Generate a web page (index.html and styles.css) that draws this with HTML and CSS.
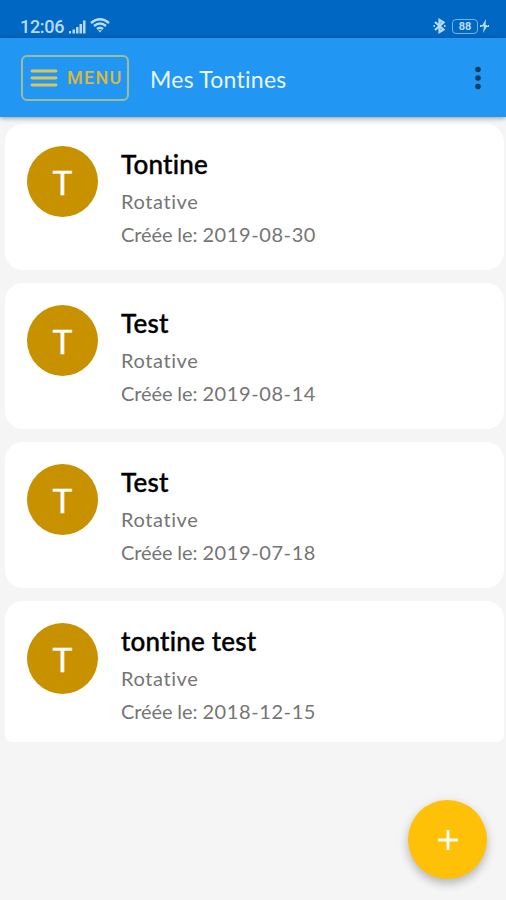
FILE: index.html
```html
<!DOCTYPE html>
<html lang="fr">
<head>
<meta charset="utf-8">
<title>Mes Tontines</title>
<link rel="stylesheet" href="styles.css">
</head>
<body>
<div class="status">
  <span class="clock">12:06</span>
  <svg class="signal" width="17" height="14" viewBox="0 0 17 14" fill="currentColor"><path d="M0 11h2v2.500H0zM3.500 9.500h2.500v4H3.500zM7 7h2.500v6.500H7zM10.500 4h2.500v9.500h-2.500zM14 0.500h2.500v13H14z"/></svg>
  <svg class="wifi" width="20" height="15" viewBox="0 0 20 15" fill="none" stroke="currentColor" stroke-width="2.400"><path d="M1 5Q10-2.500 19 5M4 8Q10 3 16 8M7 11Q10 8.500 13 11"/><path d="M8 12.200h4L10 14.500z" fill="currentColor" stroke="none"/></svg>
  <svg class="bluetooth" width="13" height="16" viewBox="0 0 13 16" fill="none" stroke="currentColor" stroke-width="2.200"><path d="M2 4l8.500 7.500L6.500 14V2l4 2.500L2 12M0.500 8h1.500M11 8h1.500"/></svg>
  <span class="battery">88</span>
  <svg class="bolt" width="9" height="14" viewBox="0 0 9 14" fill="currentColor"><path d="M6 0L1.500 7.500H4L3 14l5-8H5.500zM0 6h2v2H0zM7 6h2v2H7z"/></svg>
</div>
<header class="bar">
  <button class="menu">
    <svg width="28" height="20" viewBox="0 0 28 20" stroke="currentColor" stroke-width="2.800" stroke-linecap="round"><path d="M2 3h24M2 10h24M2 17h24"/></svg>
    <span>MENU</span>
  </button>
  <h1>Mes Tontines</h1>
  <svg class="more" width="6" height="24" viewBox="0 0 6 24" fill="currentColor"><circle cx="3" cy="3.500" r="2.800"/><circle cx="3" cy="12" r="2.800"/><circle cx="3" cy="20.500" r="2.800"/></svg>
</header>
<main class="list">
  <article class="card"><div class="avatar">T</div><div><h2>Tontine</h2><p class="type">Rotative</p><p class="date">Créée le: <span>2019-08-30</span></p></div></article>
  <article class="card"><div class="avatar">T</div><div><h2>Test</h2><p class="type">Rotative</p><p class="date">Créée le: <span>2019-08-14</span></p></div></article>
  <article class="card"><div class="avatar">T</div><div><h2>Test</h2><p class="type">Rotative</p><p class="date">Créée le: <span>2019-07-18</span></p></div></article>
  <article class="card last"><div class="avatar">T</div><div><h2>tontine test</h2><p class="type">Rotative</p><p class="date">Créée le: <span>2018-12-15</span></p></div></article>
</main>
<button class="fab" aria-label="Ajouter"><svg width="22" height="22" viewBox="0 0 22 22" stroke="currentColor" stroke-width="2.800"><path d="M11 1v20M1 11h20"/></svg></button>
</body>
</html>
```
FILE: styles.css
```css
* { box-sizing: border-box; }
body {
  margin: 0;
  height: 900px;
  overflow: hidden;
  background: #f5f5f5;
  font-family: Lato, "Liberation Sans", sans-serif;
}
h1, h2, p { margin: 0; }
button { padding: 0; font: inherit; }
svg { display: block; flex: none; }

.status {
  height: 38px;
  padding: 15px 17px 0 20px;
  display: flex;
  align-items: flex-start;
  background: #0067c3;
  color: #b7dcfb;
}
.clock {
  width: 44px;
  font: 500 18px/24px Roboto, sans-serif;
  letter-spacing: -0.3px;
}
.signal { margin: 5px 0 0 5px; }
.wifi { margin: 3px 0 0 4px; }
.bluetooth { margin: 3px 6px 0 auto; }
.battery {
  width: 26px;
  height: 15px;
  margin-top: 4px;
  border: 1.5px solid #72b4ea;
  border-radius: 4px;
  font: 700 11px/13px Roboto, sans-serif;
  text-align: center;
}
.bolt { margin: 4px 0 0 2px; }

.bar {
  position: relative;
  height: 79px;
  padding: 0 25px 0 21px;
  display: flex;
  align-items: center;
  background: #2196f3;
  box-shadow: 0 1px 5px rgba(0, 0, 0, .4);
}
.menu {
  width: 108px;
  height: 46px;
  padding-left: 7px;
  display: flex;
  align-items: center;
  gap: 9px;
  border: 2px solid #9bbd9a;
  border-radius: 6px;
  background: none;
  color: #dfc45a;
}
.menu span {
  padding-top: 1px;
  font: 500 18px/24px Roboto, sans-serif;
  letter-spacing: 1.3px;
  color: #dcb83c;
}
.bar h1 {
  margin-left: 21px;
  padding-top: 3px;
  font-size: 23px;
  font-weight: 400;
  line-height: 28px;
  letter-spacing: .25px;
  color: #e9f5ff;
}
.more { margin-left: auto; color: #173e5e; }

.list {
  padding: 7px 2px 0 5px;
  display: flex;
  flex-direction: column;
  gap: 13px;
}
.card {
  height: 146px;
  padding: 22px 22px 0;
  display: flex;
  gap: 23px;
  border-radius: 18px;
  background: #fff;
}
.card.last { height: 141px; border-radius: 18px 18px 7px 7px; }
.avatar {
  width: 71px;
  height: 71px;
  border-radius: 50%;
  background: #c79100;
  color: #fff;
  font: 400 34px/74px Roboto, sans-serif;
  -webkit-text-stroke: .4px;
  text-align: center;
}
h2 {
  font-size: 26px;
  font-weight: 500;
  line-height: 36px;
  letter-spacing: .2px;
  color: #000;
  -webkit-text-stroke: .4px;
}
.type, .date {
  font-size: 20px;
  line-height: 34px;
  color: #757575;
}
.type { padding-top: 3px; line-height: 32px; letter-spacing: .6px; }
.date { letter-spacing: -.1px; }
.date span { letter-spacing: .6px; }

.fab {
  position: absolute;
  left: 408px;
  top: 800px;
  width: 79px;
  height: 79px;
  display: flex;
  align-items: center;
  justify-content: center;
  border: 0;
  border-radius: 50%;
  background: #ffc107;
  color: #fff;
  box-shadow: 0 5px 9px rgba(0, 0, 0, .2), 0 2px 14px rgba(0, 0, 0, .08);
}
```
